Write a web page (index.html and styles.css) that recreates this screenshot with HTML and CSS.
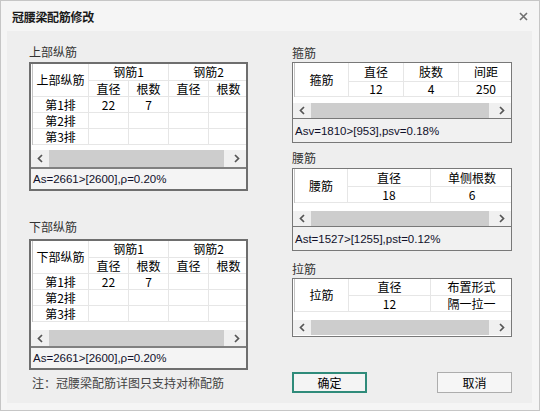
FILE: index.html
```html
<!DOCTYPE html>
<html lang="zh">
<head>
<meta charset="utf-8">
<title>冠腰梁配筋修改</title>
<link rel="stylesheet" href="styles.css">
</head>
<body>
<div class="win">
  <div class="titlebar">
    <span class="title">冠腰梁配筋修改</span>
    <svg class="close" width="9" height="9" viewBox="0 0 9 9"><path d="M1 1L8 8M8 1L1 8" stroke="#6f6f6f" stroke-width="1.6"/></svg>
  </div>
  <div class="content">
    <div class="col-left">
      <div class="label lbl-a">上部纵筋</div>
      <div class="box box-thick">
        <div class="gridwrap gw-a">
          <div class="grid grid-long">
            <div class="cell rs2">上部纵筋</div>
            <div class="cell cs2">钢筋1</div>
            <div class="cell cs2">钢筋2</div>
            <div class="cell">直径</div><div class="cell">根数</div><div class="cell">直径</div><div class="cell">根数</div>
            <div class="cell">第1排</div><div class="cell">22</div><div class="cell">7</div><div class="cell"></div><div class="cell"></div>
            <div class="cell">第2排</div><div class="cell"></div><div class="cell"></div><div class="cell"></div><div class="cell"></div>
            <div class="cell">第3排</div><div class="cell"></div><div class="cell"></div><div class="cell"></div><div class="cell"></div>
          </div>
        </div>
        <div class="scroll sc-17">
          <div class="sb-btn"><svg width="6" height="9" viewBox="0 0 6 9"><polyline points="5,1 1.5,4.5 5,8" fill="none" stroke="#555" stroke-width="1.7"/></svg></div>
          <div class="sb-thumb"></div>
          <div class="sb-gap"></div>
          <div class="sb-btn"><svg width="6" height="9" viewBox="0 0 6 9"><polyline points="1,1 4.5,4.5 1,8" fill="none" stroke="#555" stroke-width="1.7"/></svg></div>
        </div>
        <div class="status status-thick">As=2661&gt;[2600],ρ=0.20%</div>
      </div>

      <div class="label lbl-b">下部纵筋</div>
      <div class="box box-thick">
        <div class="gridwrap gw-b">
          <div class="grid grid-long">
            <div class="cell rs2">下部纵筋</div>
            <div class="cell cs2">钢筋1</div>
            <div class="cell cs2">钢筋2</div>
            <div class="cell">直径</div><div class="cell">根数</div><div class="cell">直径</div><div class="cell">根数</div>
            <div class="cell">第1排</div><div class="cell">22</div><div class="cell">7</div><div class="cell"></div><div class="cell"></div>
            <div class="cell">第2排</div><div class="cell"></div><div class="cell"></div><div class="cell"></div><div class="cell"></div>
            <div class="cell">第3排</div><div class="cell"></div><div class="cell"></div><div class="cell"></div><div class="cell"></div>
          </div>
        </div>
        <div class="scroll sc-16">
          <div class="sb-btn"><svg width="6" height="9" viewBox="0 0 6 9"><polyline points="5,1 1.5,4.5 5,8" fill="none" stroke="#555" stroke-width="1.7"/></svg></div>
          <div class="sb-thumb"></div>
          <div class="sb-gap"></div>
          <div class="sb-btn"><svg width="6" height="9" viewBox="0 0 6 9"><polyline points="1,1 4.5,4.5 1,8" fill="none" stroke="#555" stroke-width="1.7"/></svg></div>
        </div>
        <div class="status status-thick">As=2661&gt;[2600],ρ=0.20%</div>
      </div>
      <div class="note">注：冠腰梁配筋详图只支持对称配筋</div>
    </div>

    <div class="col-right">
      <div class="label lbl-c">箍筋</div>
      <div class="box box-thin">
        <div class="gridwrap gw-c">
          <div class="grid grid-gu">
            <div class="cell rs2">箍筋</div>
            <div class="cell">直径</div><div class="cell">肢数</div><div class="cell">间距</div>
            <div class="cell">12</div><div class="cell">4</div><div class="cell">250</div>
          </div>
        </div>
        <div class="scroll sc-15">
          <div class="sb-btn"><svg width="6" height="9" viewBox="0 0 6 9"><polyline points="5,1 1.5,4.5 5,8" fill="none" stroke="#555" stroke-width="1.7"/></svg></div>
          <div class="sb-thumb"></div>
          <div class="sb-gap"></div>
          <div class="sb-btn"><svg width="6" height="9" viewBox="0 0 6 9"><polyline points="1,1 4.5,4.5 1,8" fill="none" stroke="#555" stroke-width="1.7"/></svg></div>
        </div>
        <div class="status status-thin">Asv=1810&gt;[953],psv=0.18%</div>
      </div>

      <div class="label lbl-d">腰筋</div>
      <div class="box box-thin">
        <div class="gridwrap gw-d">
          <div class="grid grid-yao">
            <div class="cell rs2">腰筋</div>
            <div class="cell">直径</div><div class="cell">单侧根数</div>
            <div class="cell">18</div><div class="cell">6</div>
          </div>
        </div>
        <div class="scroll sc-15">
          <div class="sb-btn"><svg width="6" height="9" viewBox="0 0 6 9"><polyline points="5,1 1.5,4.5 5,8" fill="none" stroke="#555" stroke-width="1.7"/></svg></div>
          <div class="sb-thumb"></div>
          <div class="sb-gap"></div>
          <div class="sb-btn"><svg width="6" height="9" viewBox="0 0 6 9"><polyline points="1,1 4.5,4.5 1,8" fill="none" stroke="#555" stroke-width="1.7"/></svg></div>
        </div>
        <div class="status status-thin">Ast=1527&gt;[1255],pst=0.12%</div>
      </div>

      <div class="label lbl-e">拉筋</div>
      <div class="box box-thin box-la">
        <div class="gridwrap gw-e">
          <div class="grid grid-la">
            <div class="cell rs2">拉筋</div>
            <div class="cell">直径</div><div class="cell">布置形式</div>
            <div class="cell">12</div><div class="cell">隔一拉一</div>
          </div>
        </div>
        <div class="scroll sc-15">
          <div class="sb-btn"><svg width="6" height="9" viewBox="0 0 6 9"><polyline points="5,1 1.5,4.5 5,8" fill="none" stroke="#555" stroke-width="1.7"/></svg></div>
          <div class="sb-thumb"></div>
          <div class="sb-gap"></div>
          <div class="sb-btn"><svg width="6" height="9" viewBox="0 0 6 9"><polyline points="1,1 4.5,4.5 1,8" fill="none" stroke="#555" stroke-width="1.7"/></svg></div>
        </div>
      </div>

      <div class="buttons">
        <button class="btn btn-ok">确定</button>
        <button class="btn btn-cancel">取消</button>
      </div>
    </div>
  </div>
</div>
</body>
</html>
```

FILE: styles.css
```css
html, body {
  margin: 0;
  padding: 0;
  background: #ffffff;
}
body {
  font-family: "Noto Sans CJK SC", "Noto Sans", sans-serif;
  font-size: 12px;
  color: #000;
}
.win {
  width: 540px;
  height: 411px;
  box-sizing: border-box;
  border: 1px solid #c6c6c6;
  background: #f5f5f5;
  display: flex;
  flex-direction: column;
}
.titlebar {
  height: 30px;
  display: flex;
  align-items: center;
  justify-content: space-between;
  padding: 0 11px 0 11px;
  flex: none;
}
.title {
  font-size: 12px;
  font-weight: bold;
  color: #1b1b1b;
  letter-spacing: -0.3px;
  line-height: 16px;
  padding-top: 1px;
}
.close {
  display: block;
  margin-top: 0;
}
.content {
  margin: 0 7px 0 6px;
  height: 372px;
  background: #eeeeee;
  display: flex;
  padding-left: 22px;
  box-sizing: border-box;
}
.col-left {
  width: 219px;
  display: flex;
  flex-direction: column;
}
.col-right {
  width: 220px;
  margin-left: 44px;
  display: flex;
  flex-direction: column;
}
.label {
  height: 16px;
  line-height: 16px;
  color: #333;
  font-size: 12px;
}
.lbl-a { margin-top: 13px; margin-bottom: 2px; }
.lbl-b { margin-top: 28px; margin-bottom: 4px; }
.lbl-c { margin-top: 14px; margin-bottom: 1px; }
.lbl-d { margin-top: 7px; margin-bottom: 2px; }
.lbl-e { margin-top: 10px; margin-bottom: 1px; }

.box {
  box-sizing: border-box;
  display: flex;
  flex-direction: column;
  background: #fff;
}
.box-thick { border: 2px solid #6e6e6e; }
.box-thin { border: 1px solid #787878; }
.box-la { padding-bottom: 1px; }

.gridwrap {
  overflow: hidden;
  background: #fff;
  padding-left: 1px;
  flex: none;
}
.gw-a { height: 86px; }
.gw-b { height: 89px; }
.gw-c { height: 40px; }
.gw-d { height: 42px; }
.gw-e { height: 41px; }

.grid {
  display: grid;
  border-left: 1px solid #c4c4c4;
}
.grid-long {
  grid-template-columns: 56px 40px 40px 40px 40px;
  grid-template-rows: 17px 16px 16px 16px 16px;
  width: 217px;
}
.grid-gu {
  grid-template-columns: 54px 55px 55px 55px;
  grid-template-rows: 19px 15px;
  width: 220px;
}
.grid-yao {
  grid-template-columns: 53px 83px 83px;
  grid-template-rows: 18px 16px;
  width: 220px;
}
.grid-la {
  grid-template-columns: 54px 82px 82px;
  grid-template-rows: 17px 16px;
  width: 220px;
}
.cell {
  box-sizing: border-box;
  border-right: 1px solid #e6e6e6;
  border-bottom: 1px solid #e6e6e6;
  display: flex;
  align-items: center;
  justify-content: center;
  font-size: 12px;
  line-height: 14px;
  white-space: nowrap;
  color: #000;
}
.rs2 { grid-row: span 2; }
.cs2 { grid-column: span 2; }

.scroll {
  display: flex;
  background: #f0f0f0;
  flex: none;
}
.sc-17 { height: 17px; }
.sc-16 { height: 16px; }
.sc-15 { height: 15px; }
.sb-btn {
  width: 18px;
  display: flex;
  align-items: center;
  justify-content: center;
  flex: none;
}
.sb-thumb {
  flex: 1;
  background: #cdcdcd;
}
.sb-gap {
  width: 4px;
  flex: none;
}

.status {
  font-family: "Liberation Sans", Arial, sans-serif;
  font-size: 11.5px;
  color: #10102a;
  background: #f4f4f4;
  display: flex;
  align-items: center;
  white-space: nowrap;
  flex: none;
}
.status-thick {
  height: 22px;
  border-top: 2px solid #808080;
  box-sizing: border-box;
  padding-left: 2px;
}
.status-thin {
  height: 24px;
  border-top: 1px solid #787878;
  box-sizing: border-box;
  padding-left: 2px;
  background: #f1f1f1;
}

.note {
  margin-top: 5px;
  height: 16px;
  line-height: 16px;
  color: #444;
  padding-left: 3px;
}

.buttons {
  margin-top: 35px;
  display: flex;
  justify-content: space-between;
}
.btn {
  width: 75px;
  height: 21px;
  box-sizing: border-box;
  font-family: "Noto Sans CJK SC", sans-serif;
  font-size: 12px;
  line-height: 15px;
  padding: 0;
  color: #000;
  background: #f4f4f4;
}
.btn-ok {
  border: 2px solid #2f8b7a;
}
.btn-cancel {
  border: 1px solid #adadad;
  background: #f6f6f6;
}
```
